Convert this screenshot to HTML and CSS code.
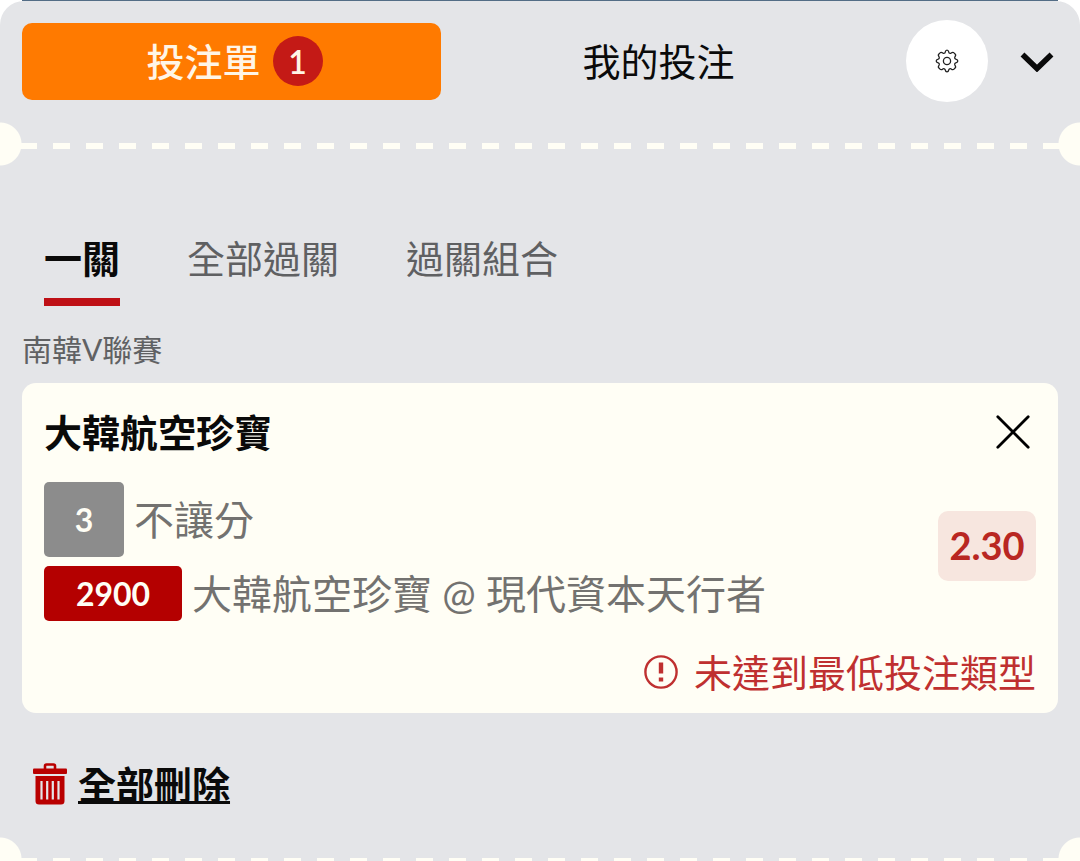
FILE: index.html
```html
<!DOCTYPE html>
<html lang="zh-Hant">
<head>
    <meta charset="UTF-8">
    <meta name="viewport" content="width=device-width, initial-scale=1.0">
    <title>投注單</title>
    <link rel="stylesheet" href="styles.css">
</head>
<body>

    <div class="slip">
        <header class="slip-header">
            <nav class="main-tabs">
                <button type="button" class="main-tab active">投注單 <span class="count">1</span></button>
                <button type="button" class="main-tab">我的投注</button>
            </nav>
            <button type="button" class="settings" aria-label="設定">
                <svg width="24" height="24" viewBox="0 0 24 24" fill="none" stroke="#222" stroke-width="1.3" stroke-linejoin="round">
                    <path d="M10.2 3.2 Q10.6 1.2 12 1.2 Q13.4 1.2 13.8 3.2 Q14.4 4.8 16.1 4.1 Q17.9 2.7 19 3.9 L20.1 5 Q21.3 6.1 19.9 7.9 Q19.2 9.5 20.8 10.1 Q22.8 10.6 22.8 12 Q22.8 13.4 20.8 13.9 Q19.2 14.5 19.9 16.1 Q21.3 18 20.1 19 L19 20.1 Q17.9 21.3 16.1 19.9 Q14.3 19.2 13.8 20.8 Q13.4 22.8 12 22.8 Q10.6 22.8 10.2 20.8 Q9.6 19.2 7.9 19.9 Q6.1 21.3 5 20.1 L3.9 19 Q2.7 18 4.1 16.1 Q4.8 14.5 3.2 13.9 Q1.2 13.4 1.2 12 Q1.2 10.6 3.2 10.1 Q4.8 9.5 4.1 7.9 Q2.7 6.1 3.9 5 L5 3.9 Q6.1 2.7 7.9 4.1 Q9.6 4.8 10.2 3.2 Z"/>
                    <circle cx="12" cy="12" r="3.6"/>
                </svg>
            </button>
            <button type="button" class="collapse" aria-label="收合">
                <svg width="34" height="22" viewBox="0 0 34 22" fill="none" stroke="#0a0a0a" stroke-width="5.6">
                    <path d="M2.5 4.5 L17 18.5 L31.5 4.5"/>
                </svg>
            </button>
        </header>

        <div class="tear"></div>

        <nav class="bet-types">
            <button type="button" class="bet-type active">一關</button>
            <button type="button" class="bet-type">全部過關</button>
            <button type="button" class="bet-type">過關組合</button>
        </nav>

        <main class="bets">
            <p class="league">南韓V聯賽</p>
            <article class="bet">
                <div class="bet-top">
                    <h2>大韓航空珍寶</h2>
                    <button type="button" class="remove" aria-label="移除">
                        <svg width="34" height="34" viewBox="0 0 34 34" fill="none" stroke="#000" stroke-width="2.8" stroke-linecap="round">
                            <path d="M1.8 1.8 L32.2 32.2 M32.2 1.8 L1.8 32.2"/>
                        </svg>
                    </button>
                </div>
                <div class="bet-body">
                    <div class="bet-info">
                        <div class="info-row"><span class="tag market-tag">3</span><span>不讓分</span></div>
                        <div class="info-row"><span class="tag match-tag">2900</span><span>大韓航空珍寶 @ 現代資本天行者</span></div>
                    </div>
                    <span class="odds">2.30</span>
                </div>
                <p class="warning">
                    <svg width="34" height="34" viewBox="0 0 34 34" fill="none" stroke="#bf3030">
                        <circle cx="17" cy="17" r="15.6" stroke-width="2.4"/>
                        <path d="M17 7.5 V18.5 M17 22.5 V26.5" stroke-width="4.4"/>
                    </svg>
                    未達到最低投注類型
                </p>
            </article>
            <button type="button" class="delete-all">
                <svg width="34" height="42" viewBox="0 0 34 42">
                    <path d="M12 6 V3 Q12 1.5 13.5 1.5 H20.5 Q22 1.5 22 3 V6" fill="none" stroke="#b90000" stroke-width="2.6"/>
                    <rect x="0" y="5.5" width="34" height="5.5" rx="1" fill="#b90000"/>
                    <path d="M2.5 13 H31.5 V38 Q31.5 41.5 28 41.5 H6 Q2.5 41.5 2.5 38 Z" fill="#b90000"/>
                    <path d="M8.5 18 V36.5 M14.2 18 V36.5 M19.8 18 V36.5 M25.5 18 V36.5" stroke="#e4e5e8" stroke-width="2.2"/>
                </svg>
                <span>全部刪除</span>
            </button>
        </main>

        <div class="tear"></div>
    </div>

</body>
</html>
```

FILE: styles.css
```css
*{
    box-sizing: border-box;
}
body{
    margin: 0;
    height: 100vh;
    overflow: hidden;
    /* edge of the page under the slip */
    background: linear-gradient(#536d86, #536d86) center top / calc(100% - 44px) 1px no-repeat #fff;
    padding-top: 1px;
    font-family: Lato, "Noto Sans CJK TC", sans-serif;
    font-size: 38px;
    line-height: 46px;
    color: #0a0a0a;
}
button{
    border: none;
    background: none;
    padding: 0;
    font: inherit;
    color: inherit;
    cursor: pointer;
}
svg{
    display: block;
    flex: none;
}
h2, p{
    margin: 0;
}

.slip{
    background-color: #e4e5e8;
    border-radius: 24px 24px 0 0;
    overflow: hidden;
}

/* header */
.slip-header{
    display: flex;
    align-items: center;
    padding: 19px 22px 20px;
}
.main-tabs{
    flex: 1;
    display: grid;
    grid-template-columns: 1fr 1fr;
    gap: 8px;
}
.main-tab{
    height: 77px;
    display: flex;
    align-items: center;
    justify-content: center;
    gap: 12px;
    border-radius: 10px;
}
.main-tab.active{
    padding-left: 6px;
    background-color: #ff7a00;
    color: #fff5e6;
    font-weight: 500;
}
.count{
    width: 50px;
    height: 50px;
    border-radius: 50%;
    background-color: #c41a16;
    font-size: 32px;
    line-height: 52px;
    font-weight: 600;
}
.settings{
    width: 82px;
    height: 82px;
    margin-left: 38px;
    border-radius: 50%;
    background-color: #fff;
    display: flex;
    align-items: center;
    justify-content: center;
}
.collapse{
    width: 42px;
    height: 42px;
    margin-left: 28px;
    display: flex;
    align-items: center;
    justify-content: center;
}

/* perforated line with a notch on each side */
.tear{
    height: 44px;
    background:
        radial-gradient(circle at 0 50%, #fffef5 21px, transparent 22px),
        radial-gradient(circle at 100% 50%, #fffef5 21px, transparent 22px),
        linear-gradient(90deg, #fffef5 17px, transparent 17px) 20px 21px / 33px 6px repeat-x;
}

/* bet types */
.bet-types{
    display: flex;
    gap: 67px;
    padding: 63px 44px 0;
}
.bet-type{
    height: 77px;
    padding-bottom: 11px;
    border-bottom: 8px solid transparent;
    color: #5f6062;
}
.bet-type.active{
    color: #0a0a0a;
    font-weight: bold;
    border-bottom-color: #be1016;
}

/* bets */
.bets{
    padding: 24px 22px 30px;
}
.league{
    font-size: 30px;
    line-height: 38px;
    margin-bottom: 15px;
    color: #606163;
}
.bet{
    padding: 20px 22px 18px;
    border-radius: 14px;
    background-color: #fffef5;
}
.bet-top{
    display: flex;
    align-items: center;
    justify-content: space-between;
    height: 58px;
    padding-right: 6px;
}
.bet-top h2{
    font-size: 38px;
    font-weight: bold;
}
.bet-body{
    display: flex;
    align-items: center;
    justify-content: space-between;
    margin-top: 21px;
}
.bet-info{
    display: flex;
    flex-direction: column;
    gap: 9px;
    font-size: 40px;
    line-height: 44px;
    color: #737270;
}
.info-row{
    display: flex;
    align-items: center;
    gap: 10px;
}
.tag{
    display: flex;
    align-items: center;
    justify-content: center;
    border-radius: 5px;
    color: #fffef5;
    font-size: 32px;
    font-weight: bold;
}
.market-tag{
    width: 80px;
    height: 75px;
    background-color: #8c8c8c;
}
.match-tag{
    width: 138px;
    height: 55px;
    background-color: #b40000;
}
.odds{
    width: 98px;
    height: 70px;
    margin-top: -12px;
    border-radius: 10px;
    background-color: #f7e6df;
    color: #b92722;
    font-weight: bold;
    line-height: 68px;
    text-align: center;
}
.warning{
    display: flex;
    align-items: center;
    justify-content: flex-end;
    gap: 16px;
    margin-top: 28px;
    color: #bf3030;
}
.delete-all{
    display: flex;
    align-items: center;
    gap: 11px;
    margin: 48px 0 0 11px;
    font-weight: bold;
}
.delete-all span{
    text-decoration: underline;
    text-decoration-thickness: 3px;
}
```
